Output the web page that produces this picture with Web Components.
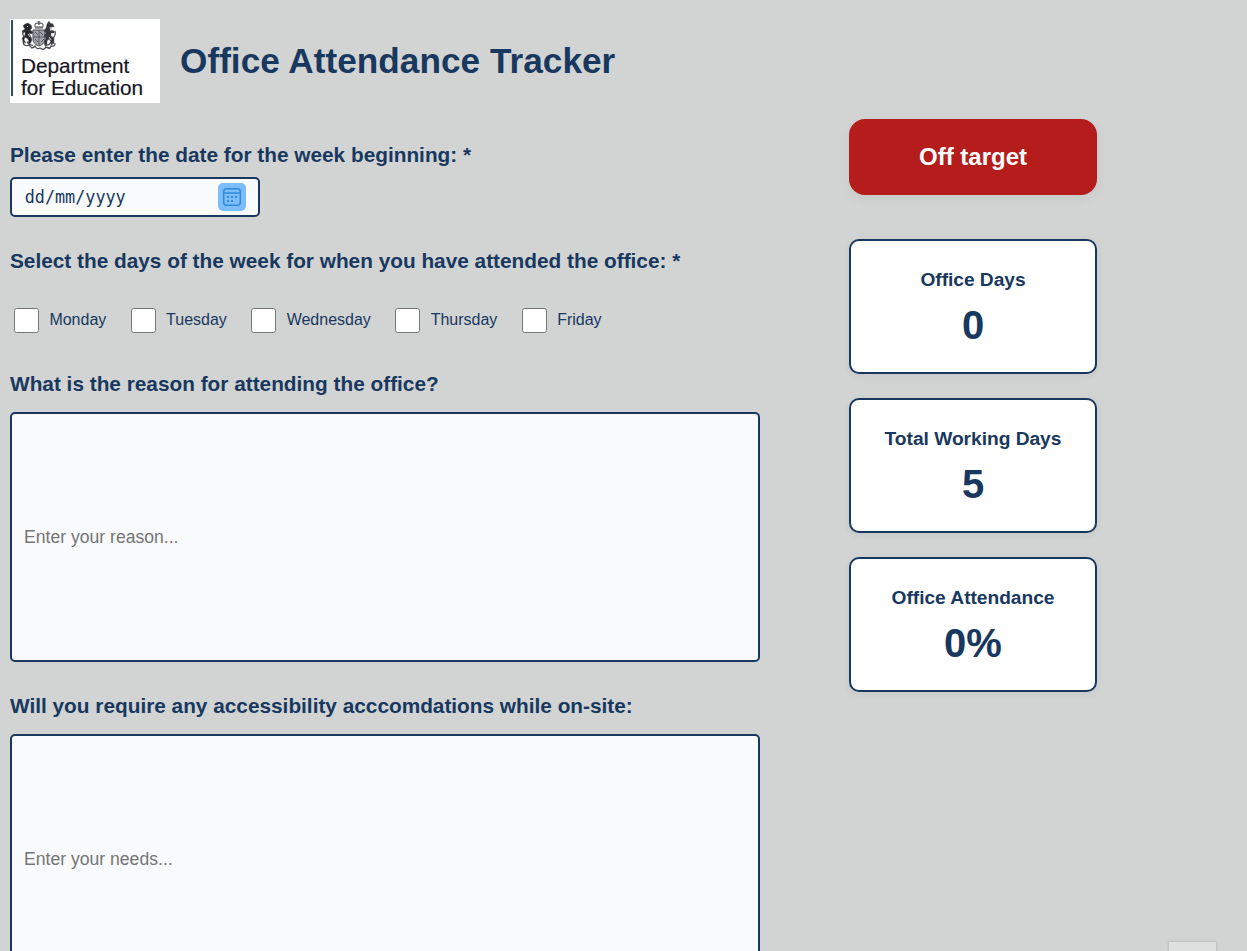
<!DOCTYPE html>
<html lang="en"><head><meta charset="utf-8"><title>Office Attendance Tracker</title>
<style>
html,body{margin:0;height:951px;overflow:hidden}
body{background:#d2d4d3;font-family:"Liberation Sans",Arial,sans-serif;color:#183860}
</style></head><body>
<attendance-app></attendance-app>
<script>
function define(name, html){
  const t=document.createElement('template');t.innerHTML=html;
  customElements.define(name,class extends HTMLElement{
    constructor(){super();this.attachShadow({mode:'open'}).append(t.content.cloneNode(true));}
  });
}
define('dfe-logo',`<style>
:host{display:block;width:150px;height:84px;background:#fff;box-sizing:border-box;padding:1px 0 0 1px;flex:none}
.in{border-left:2px solid #2b4a76;height:76px;padding-left:8px;color:#17171f}
svg{display:block;margin:0 0 0 -1px}
.t{font-size:20.8px;line-height:22.5px;white-space:nowrap;margin-top:3.5px;letter-spacing:-.04px;-webkit-text-stroke:.2px #17171f}
</style><div class="in"><svg width="38" height="31" viewBox="0 0 38 31" fill="none" stroke="#4a4a52">
<path d="M15 7q-1-4 2-4l2 1 2-1q3 0 2 4zM19 1v4M17.5 2h3M15 8h8" stroke-width="1"/>
<path d="M13 10h12v9q0 5-6 7-6-2-6-7z" fill="#a2a2aa" stroke-width="1"/>
<path d="M19 10v15M13 17h12M15 12l3 3m2-3 3 3m-8 4 3 3m3 0 3-3" stroke-width=".8"/>
<path d="M5 4l3-1 3 2 1 3-2 2 3 2-1 2-3-1 2 4 1 3-2 4-2-2 0-3-3-2-1 3 2 3-3-1-1-4 3-3 0-3-2 1-1-2 3-2-2-3z" fill="#26262d" stroke-width=".4"/>
<path d="M27 4l2-3 1 2 3 1 1 3-3 0 0 3 3 1 0 2-3 0 0 3 3 2 0 5-3 2 0-3-2-3-2 2 0 4-2 1-1-4 2-4-2-2 2-3-2-2 2-3z" fill="#36363d" stroke-width=".4"/>
<path d="M3 11q-1 4 2 7M35 11q1 4-2 7M3 22q1 5 6 3 3 5 6 1 2 4 5 2 4 3 6-1 4 3 5-1 4 1 4-3M7 22q3 4 6 3m12 0q4 1 6-3M11 28l3-1m11 0 4 1" stroke-width="1.3"/>
<path d="M7 6l1 1M8 14l2 3M30 7l1 4M29 17l2 3M6 20l3 1" stroke="#fff" stroke-width=".8"/>
</svg><div class="t">Department<br>for Education</div></div>`);
define('page-header',`<style>:host{display:flex;align-items:center;gap:20px;padding:19px 0 0 10px;height:84px}
h1{margin:0;font-size:35.2px;line-height:40px;letter-spacing:.02px}</style><dfe-logo></dfe-logo><h1><slot></slot></h1>`);
define('field-label',`<style>:host{display:block;font-weight:700;font-size:20.8px;line-height:24px;white-space:nowrap}</style><slot></slot>`);
define('date-field',`<style>:host{display:flex;align-items:center;justify-content:space-between;box-sizing:border-box;width:250px;height:40px;border:2px solid #183860;border-radius:5px;background:#f8fafc;padding:0 12px 0 12.7px;font:16.8px "DejaVu Sans Mono",monospace}
svg{display:block}</style><span><slot></slot></span>
<svg width="28" height="28" viewBox="0 0 28 28"><rect width="28" height="28" rx="5" fill="#7abdfa"/><g fill="none" stroke="#328bd2" stroke-width="1.5"><rect x="5.7" y="5.7" width="16.6" height="16.6" rx="3"/><path d="M6 10h16"/></g><g fill="#328bd2"><path d="M9 13h2v2H9zM13 13h2v2h-2zM17 13h2v2h-2zM9 17h2v2H9zM13 17h2v2h-2z"/></g></svg>`);
define('day-option',`<style>:host{display:flex;align-items:center;gap:10.4px;font-size:16px;line-height:20px}
i{box-sizing:border-box;width:25px;height:25px;border:1px solid #767676;border-radius:2.5px;background:#fff}
span{margin-top:-2px}</style><i></i><span><slot></slot></span>`);
define('day-list',`<style>:host{display:flex;gap:24.4px;padding-left:4px}</style><slot></slot>`);
define('text-box',`<style>:host{display:flex;align-items:center;box-sizing:border-box;width:750px;height:250px;border:2px solid #183860;border-radius:5px;background:#f8fafc;padding:0 12px;color:#757575;font-size:17.6px}</style><slot></slot>`);
define('status-banner',`<style>:host{display:flex;align-items:center;justify-content:center;height:76px;border-radius:16px;background:#b51c1c;color:#fff;font-weight:700;font-size:24px;box-shadow:0 4px 12px rgba(24,24,60,.05)}</style><slot></slot>`);
define('stat-card',`<style>:host{display:block;box-sizing:border-box;height:135px;border:2px solid #183860;border-radius:10px;background:#fff;text-align:center;font-weight:700;box-shadow:0 2px 8px rgba(24,24,60,.06);padding-top:28px}
.l{font-size:19.2px;line-height:22px;letter-spacing:-.03px}.v{font-size:40px;line-height:46px;margin-top:11px}</style><div class="l"><slot name="label"></slot></div><div class="v"><slot></slot></div>`);
define('attendance-app',`<style>:host{display:block;height:951px;position:relative;overflow:hidden}
main{display:grid;grid-template-columns:750px 248px;column-gap:89px;padding-left:10px}
.form{padding-top:40px}
date-field{margin:10px 0 32px}day-list{margin:35px 0 39px}
text-box{margin:16px 0 32px}
aside{padding-top:16px}
stat-card{margin-top:24px}status-banner{margin-bottom:44px}
.corner{position:absolute;left:1168px;top:941px;width:47px;height:20px;border:1px solid #c3c5c4;background:#dee0df;box-shadow:0 0 2px #bfc1c0}
</style>
<page-header>Office Attendance Tracker</page-header>
<main><div class="form">
<field-label>Please enter the date for the week beginning: *</field-label>
<date-field>dd/mm/yyyy</date-field>
<field-label>Select the days of the week for when you have attended the office: *</field-label>
<day-list><day-option>Monday</day-option><day-option>Tuesday</day-option><day-option>Wednesday</day-option><day-option>Thursday</day-option><day-option>Friday</day-option></day-list>
<field-label>What is the reason for attending the office?</field-label>
<text-box>Enter your reason...</text-box>
<field-label>Will you require any accessibility acccomdations while on-site:</field-label>
<text-box>Enter your needs...</text-box>
</div><aside><status-banner>Off target</status-banner>
<stat-card style="margin-top:0"><span slot="label">Office Days</span>0</stat-card>
<stat-card><span slot="label">Total Working Days</span>5</stat-card>
<stat-card><span slot="label">Office Attendance</span>0%</stat-card></aside></main>
<div class="corner"></div>`);
</script></body></html>
